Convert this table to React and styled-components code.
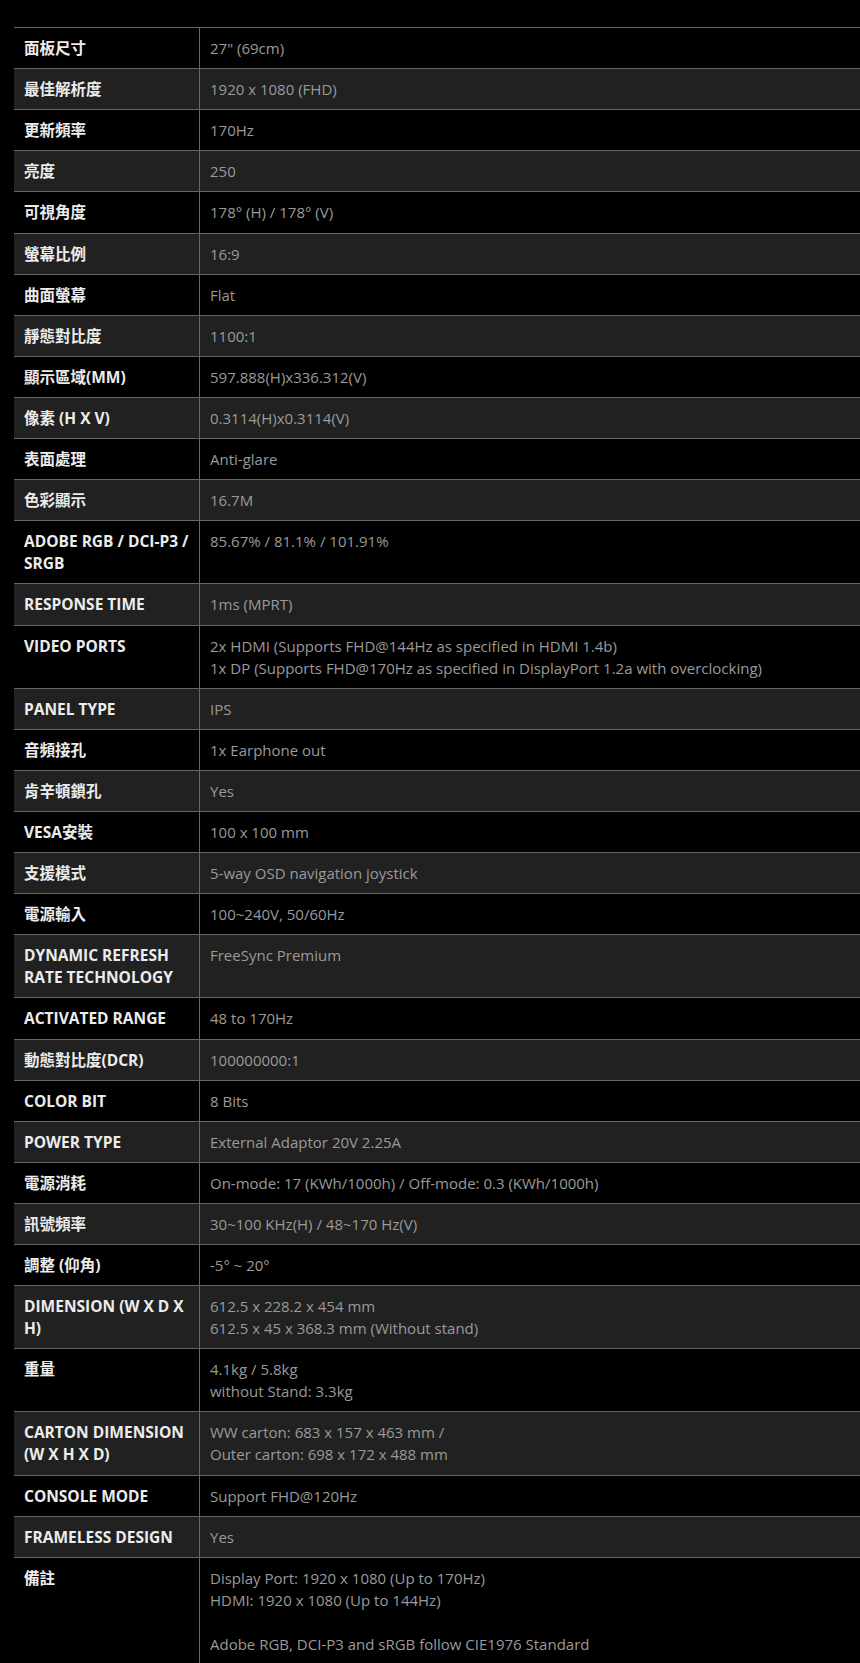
import React from "react";
import styled, { createGlobalStyle } from "styled-components";

const Global = createGlobalStyle`
  html, body { margin: 0; padding: 0; background: #000; }
  body { font-family: "Open Sans", "Noto Sans CJK TC", sans-serif; }
`;

const Page = styled.div`
  background: #000;
  min-height: 1663px;
  padding: 27px 0 0 14px;
  box-sizing: border-box;
`;

const Table = styled.div`
  border-top: 1px solid #666;
  display: flex;
  flex-direction: column;
`;

const Row = styled.div`
  display: grid;
  grid-template-columns: 186px 1fr;
  border-bottom: 1px solid #666;
  background: ${(p) => (p.$alt ? "#212121" : "#000")};
`;

const Label = styled.div`
  border-right: 1px solid #666;
  padding: 9px 10px 9.12px;
  font-size: 15.5px;
  line-height: 22px;
  font-weight: 700;
  color: #ececec;
`;

const Value = styled.div`
  padding: 9px 10px 9.12px;
  font-size: 15px;
  line-height: 22px;
  font-weight: 400;
  color: #9a9a9a;
  white-space: pre-line;
`;

const specs = [
  ["面板尺寸", '27" (69cm)'],
  ["最佳解析度", "1920 x 1080 (FHD)"],
  ["更新頻率", "170Hz"],
  ["亮度", "250"],
  ["可視角度", "178° (H) / 178° (V)"],
  ["螢幕比例", "16:9"],
  ["曲面螢幕", "Flat"],
  ["靜態對比度", "1100:1"],
  ["顯示區域(MM)", "597.888(H)x336.312(V)"],
  ["像素 (H X V)", "0.3114(H)x0.3114(V)"],
  ["表面處理", "Anti-glare"],
  ["色彩顯示", "16.7M"],
  ["ADOBE RGB / DCI-P3 / SRGB", "85.67% / 81.1% / 101.91%"],
  ["RESPONSE TIME", "1ms (MPRT)"],
  [
    "VIDEO PORTS",
    "2x HDMI (Supports FHD@144Hz as specified in HDMI 1.4b)\n1x DP (Supports FHD@170Hz as specified in DisplayPort 1.2a with overclocking)",
  ],
  ["PANEL TYPE", "IPS"],
  ["音頻接孔", "1x Earphone out"],
  ["肯辛頓鎖孔", "Yes"],
  ["VESA安裝", "100 x 100 mm"],
  ["支援模式", "5-way OSD navigation joystick"],
  ["電源輸入", "100~240V, 50/60Hz"],
  ["DYNAMIC REFRESH RATE TECHNOLOGY", "FreeSync Premium"],
  ["ACTIVATED RANGE", "48 to 170Hz"],
  ["動態對比度(DCR)", "100000000:1"],
  ["COLOR BIT", "8 Bits"],
  ["POWER TYPE", "External Adaptor 20V 2.25A"],
  ["電源消耗", "On-mode: 17 (KWh/1000h) / Off-mode: 0.3 (KWh/1000h)"],
  ["訊號頻率", "30~100 KHz(H) / 48~170 Hz(V)"],
  ["調整 (仰角)", "-5° ~ 20°"],
  ["DIMENSION (W X D X H)", "612.5 x 228.2 x 454 mm\n612.5 x 45 x 368.3 mm (Without stand)"],
  ["重量", "4.1kg / 5.8kg\nwithout Stand: 3.3kg"],
  ["CARTON DIMENSION (W X H X D)", "WW carton: 683 x 157 x 463 mm /\nOuter carton: 698 x 172 x 488 mm"],
  ["CONSOLE MODE", "Support FHD@120Hz"],
  ["FRAMELESS DESIGN", "Yes"],
  [
    "備註",
    "Display Port: 1920 x 1080 (Up to 170Hz)\nHDMI: 1920 x 1080 (Up to 144Hz)\n\nAdobe RGB, DCI-P3 and sRGB follow CIE1976 Standard",
  ],
];

export default function App() {
  return (
    <>
      <Global />
      <Page>
        <Table>
          {specs.map(([k, v], i) => (
            <Row key={k} $alt={i % 2 === 1}>
              <Label>{k}</Label>
              <Value>{v}</Value>
            </Row>
          ))}
        </Table>
      </Page>
    </>
  );
}
